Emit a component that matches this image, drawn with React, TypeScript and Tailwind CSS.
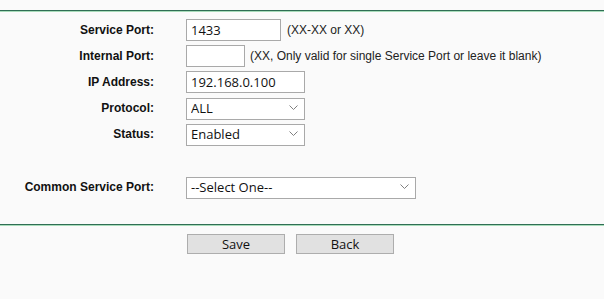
import React from 'react';

const LABEL = 'w-[154px] shrink-0 text-right text-[12px] font-bold text-[#111]';
const FIELD =
  "h-[22px] border border-[#a9a9a9] bg-white px-[4px] text-[13px] text-[#111] font-['Open_Sans'] outline-none";

function Chevron() {
  return (
    <svg
      className="pointer-events-none absolute right-[7px] top-[9px]"
      width="9"
      height="5"
      viewBox="0 0 9 5"
      fill="none"
    >
      <path d="M0.5 0.5 L4.5 4.5 L8.5 0.5" stroke="#808080" strokeWidth="1" />
    </svg>
  );
}

function Select({ value, width }: { value: string; width: string }) {
  return (
    <div className={`relative ${width}`}>
      <select
        defaultValue={value}
        className={`${FIELD} w-full appearance-none rounded-none pr-[20px]`}
      >
        <option>{value}</option>
      </select>
      <Chevron />
    </div>
  );
}

function Row({ label, children }: { label: string; children: React.ReactNode }) {
  return (
    <div className="flex h-[22px] items-center">
      <div className={LABEL}>{label}</div>
      <div className="ml-[32px] flex items-center">{children}</div>
    </div>
  );
}

function Divider() {
  return <div className="h-[2px] border-t border-[#2f6e54] bg-[#a8dcba]" />;
}

export default function App() {
  return (
    <div className="min-h-[299px] bg-[#fafafa] font-['Liberation_Sans',Arial,sans-serif]">
      <div className="h-[10px]" />
      <Divider />

      <div className="flex flex-col gap-[4px] pt-[7px]">
        <Row label="Service Port:">
          <input defaultValue="1433" className={`${FIELD} w-[95px]`} />
          <span className="ml-[6px] text-[12px] text-[#222]">(XX-XX or XX)</span>
        </Row>
        <Row label="Internal Port:">
          <input defaultValue="" className={`${FIELD} w-[59px]`} />
          <span className="ml-[5px] text-[12px] text-[#222]">
            (XX, Only valid for single Service Port or leave it blank)
          </span>
        </Row>
        <Row label="IP Address:">
          <input defaultValue="192.168.0.100" className={`${FIELD} w-[119px]`} />
        </Row>
        <Row label="Protocol:">
          <Select value="ALL" width="w-[119px]" />
        </Row>
        <Row label="Status:">
          <Select value="Enabled" width="w-[119px]" />
        </Row>
      </div>

      <div className="pt-[31px]">
        <Row label="Common Service Port:">
          <Select value="--Select One--" width="w-[230px]" />
        </Row>
      </div>

      <div className="h-[26px]" />
      <Divider />

      <div className="ml-[187px] mt-[8px] flex gap-[11px]">
        <button className="h-[20px] w-[98px] border border-[#adadad] bg-[#e1e1e1] text-[13px] text-[#111] font-['Open_Sans']">
          Save
        </button>
        <button className="h-[20px] w-[98px] border border-[#adadad] bg-[#e1e1e1] text-[13px] text-[#111] font-['Open_Sans']">
          Back
        </button>
      </div>
    </div>
  );
}
